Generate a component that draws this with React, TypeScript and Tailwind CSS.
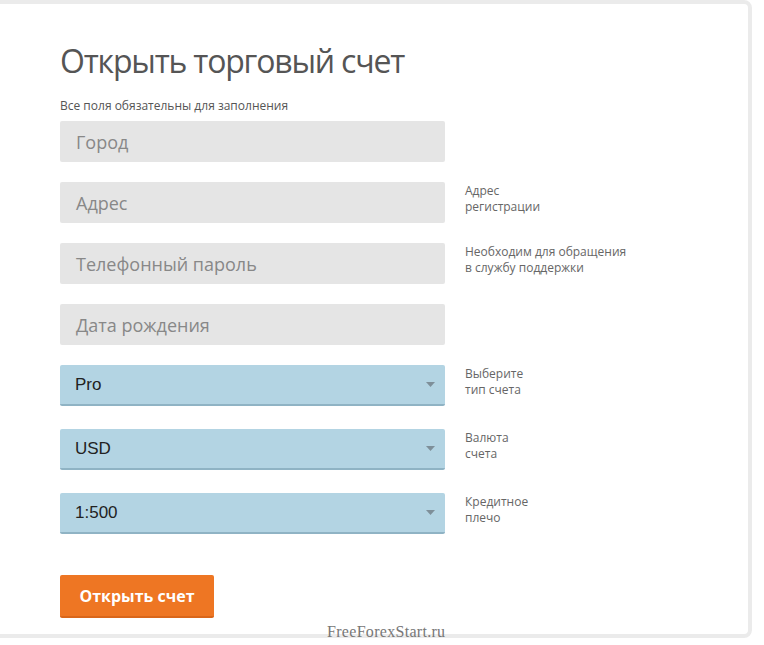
const TEXT_FIELDS = [
  { placeholder: "Город", note: [] as string[] },
  { placeholder: "Адрес", note: ["Адрес", "регистрации"] },
  { placeholder: "Телефонный пароль", note: ["Необходим для обращения", "в службу поддержки"] },
  { placeholder: "Дата рождения", note: [] as string[] },
];

const SELECTS = [
  { value: "Pro", note: ["Выберите", "тип счета"] },
  { value: "USD", note: ["Валюта", "счета"] },
  { value: "1:500", note: ["Кредитное", "плечо"] },
];

function Note({ lines }: { lines: string[] }) {
  return (
    <div className="pl-5 pt-[1px] text-[12px] leading-[16px] text-[#666]">
      {lines.map((l) => (
        <div key={l}>{l}</div>
      ))}
    </div>
  );
}

export default function App() {
  return (
    <div className="relative w-[764px] h-[645px] bg-white overflow-hidden font-['Open_Sans',sans-serif]">
      <div className="-ml-3 w-[764px] h-[638px] border-4 border-[#ebebeb] rounded-lg bg-white pl-[68px] pt-[35px]">
        <h1 className="text-[32px] leading-[44px] text-[#555] tracking-[-1.2px]">
          Открыть торговый счет
        </h1>
        <p className="mt-[15px] text-[12px] leading-[16px] text-[#555]">
          Все поля обязательны для заполнения
        </p>

        <div className="mt-[7px] flex flex-col gap-[20px]">
          {TEXT_FIELDS.map((f) => (
            <div key={f.placeholder} className="flex">
              <div className="w-[385px] h-[41px] bg-[#e5e5e5] rounded-[2px] flex items-center pl-4 pt-[1px] text-[18px] text-[#888]">
                {f.placeholder}
              </div>
              <Note lines={f.note} />
            </div>
          ))}
        </div>

        <div className="mt-[20px] flex flex-col gap-[23px]">
          {SELECTS.map((s) => (
            <div key={s.value} className="flex">
              <div className="w-[385px] h-[41px] bg-[#b3d4e3] border-b-2 border-[#8fb3c4] rounded-[2px] flex items-center justify-between pl-[15px] pr-[10px] font-['Liberation_Sans',sans-serif] text-[17px] text-[#222]">
                <span>{s.value}</span>
                <svg width="9" height="5" viewBox="0 0 9 5">
                  <path d="M0 0h9L4.5 5z" fill="#7e8f99" />
                </svg>
              </div>
              <Note lines={s.note} />
            </div>
          ))}
        </div>

        <button
          type="button"
          className="mt-[41px] w-[154px] h-[43px] bg-[#ee7623] rounded-[2px] border-b-2 border-[#d9661a] text-white text-[16px] font-bold"
        >
          Открыть счет
        </button>
      </div>

      <div className="absolute left-[327px] top-[620px] font-['Liberation_Serif',serif] text-[16px] tracking-[0.3px] text-[#777]">
        FreeForexStart.ru
      </div>
    </div>
  );
}
